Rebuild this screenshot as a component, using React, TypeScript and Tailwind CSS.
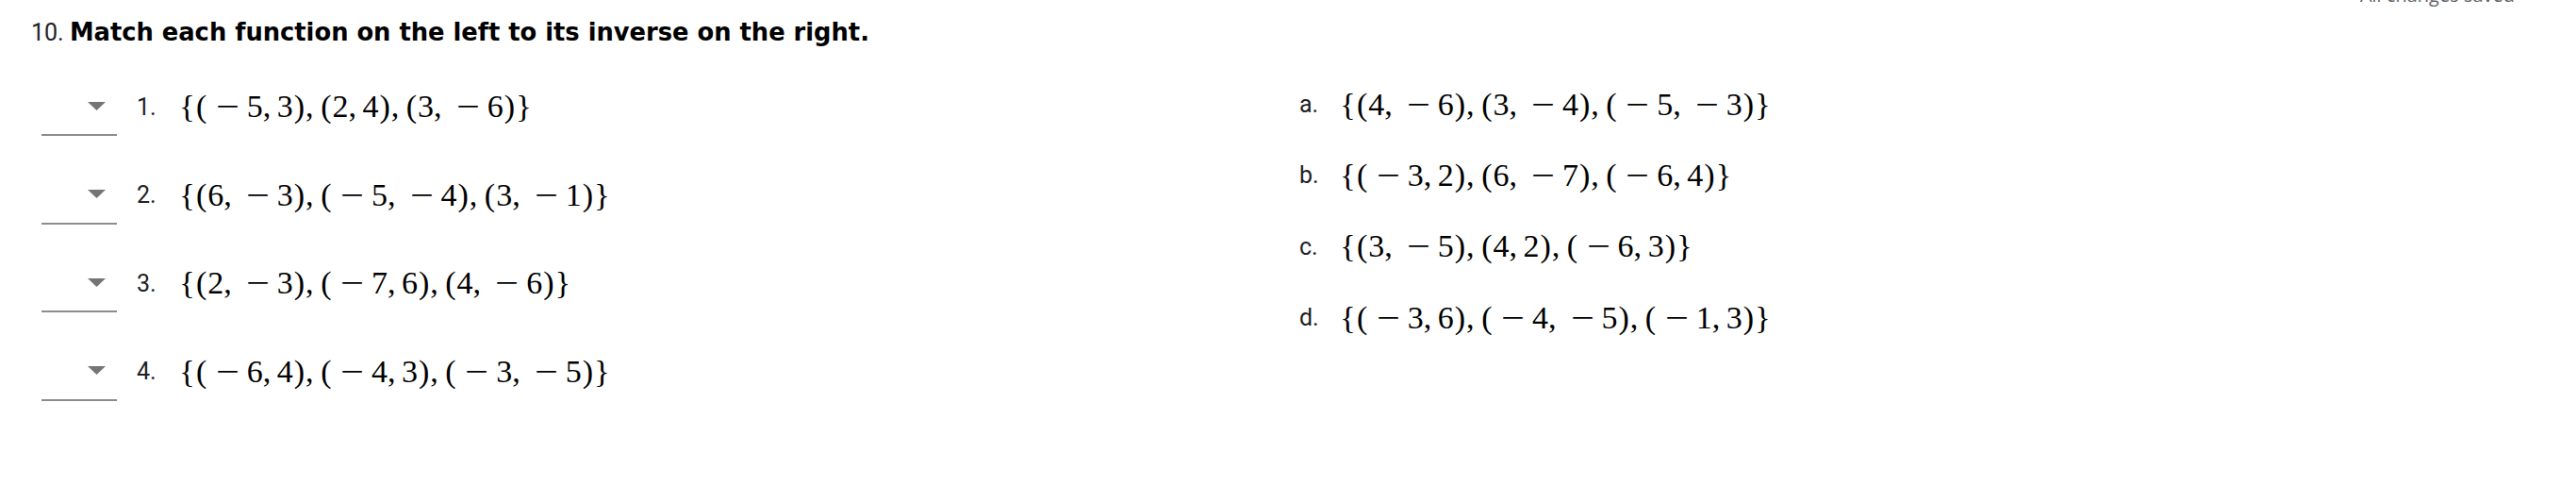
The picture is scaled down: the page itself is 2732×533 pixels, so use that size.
const leftItems = [
  { n: "1.", expr: "{(-5,3),(2,4),(3,-6)}" },
  { n: "2.", expr: "{(6,-3),(-5,-4),(3,-1)}" },
  { n: "3.", expr: "{(2,-3),(-7,6),(4,-6)}" },
  { n: "4.", expr: "{(-6,4),(-4,3),(-3,-5)}" },
];

const rightItems = [
  { n: "a.", expr: "{(4,-6),(3,-4),(-5,-3)}" },
  { n: "b.", expr: "{(-3,2),(6,-7),(-6,4)}" },
  { n: "c.", expr: "{(3,-5),(4,2),(-6,3)}" },
  { n: "d.", expr: "{(-3,6),(-4,-5),(-1,3)}" },
];

// tiny TeX-ish typesetter: fixed glyph widths with math spacing
function MathText({ expr }: { expr: string }) {
  return (
    <span className="inline-flex items-center font-['Liberation_Serif','DejaVu_Serif',serif] text-[34px] leading-none text-black whitespace-pre">
      {expr.split("").map((ch, i) => {
        if (ch === "-")
          return (
            <span key={i} className="inline-block w-[0.778em] mx-[0.222em] text-center scale-x-[1.3]">
              −
            </span>
          );
        if (ch === ",")
          return (
            <span key={i} className="inline-block w-[0.278em] mr-[0.167em]">
              ,
            </span>
          );
        if (ch === "(" || ch === ")")
          return (
            <span key={i} className="inline-block w-[0.389em] text-center">
              {ch}
            </span>
          );
        return (
          <span key={i} className="inline-block w-[0.5em] text-center">
            {ch}
          </span>
        );
      })}
    </span>
  );
}

export default function App() {
  return (
    <div className="relative w-[2732px] h-[533px] bg-white overflow-hidden font-['Roboto','Liberation_Sans',sans-serif] text-[#202124]">
      {/* save status, mostly scrolled off the top */}
      <div className="absolute right-[65px] top-[-15px] text-[20px] leading-[20px] text-[#5f6368] font-['Open_Sans',sans-serif]">
        All changes saved
      </div>

      <div className="pl-[33px] pt-[19px] text-[25px] leading-[30px]">
        <span className="text-[#202124]">10. </span>
        <span className="font-bold font-['DejaVu_Sans',sans-serif] text-[25.75px] text-black">
          Match each function on the left to its inverse on the right.
        </span>
      </div>

      <div className="flex">
        {/* left: dropdowns */}
        <div className="w-[1378px] pl-[44px] pt-[32px] flex flex-col gap-[31.5px]">
          {leftItems.map((it) => (
            <div key={it.n} className="flex items-center">
              <div className="w-[80px] h-[62px] border-b-2 border-[#8c8c8c] flex items-center justify-end pr-[12px]">
                <svg width="19" height="9" viewBox="0 0 19 9">
                  <path d="M0 0h19L9.5 9z" fill="#757575" />
                </svg>
              </div>
              <span className="ml-[21px] w-[45px] text-[25px] leading-none">{it.n}</span>
              <MathText expr={it.expr} />
            </div>
          ))}
        </div>

        {/* right: answers */}
        <div className="pt-[23px] flex flex-col">
          {rightItems.map((it) => (
            <div key={it.n} className="h-[75.3px] flex items-center">
              <span className="w-[43px] text-[25px] leading-none">{it.n}</span>
              <MathText expr={it.expr} />
            </div>
          ))}
        </div>
      </div>
    </div>
  );
}
